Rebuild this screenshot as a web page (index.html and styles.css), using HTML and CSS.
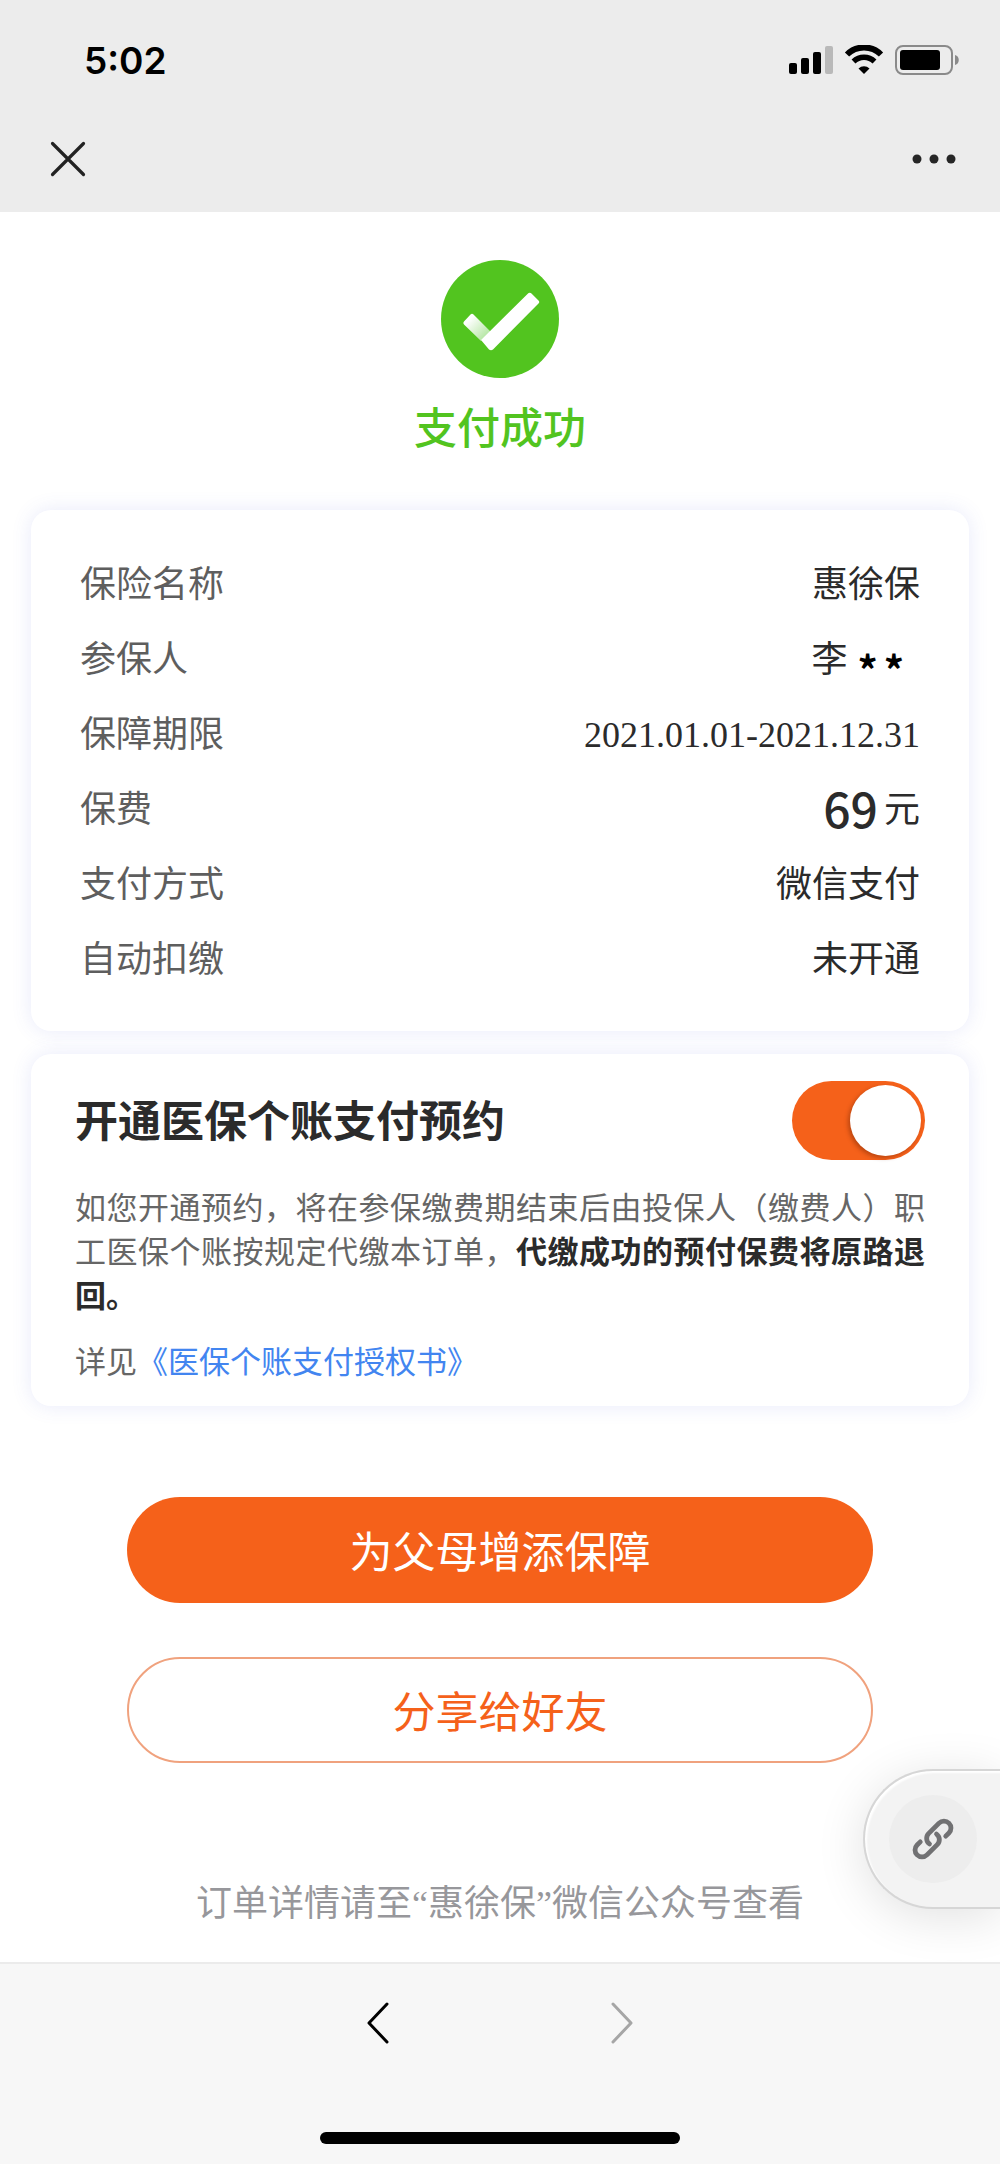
FILE: index.html
```html
<!DOCTYPE html>
<html lang="zh-CN">
<head>
<meta charset="utf-8">
<meta name="viewport" content="width=device-width, initial-scale=1">
<title>支付成功</title>
<link rel="stylesheet" href="styles.css">
</head>
<body>
<div class="page">
  <header class="top">
    <div class="status">
      <span class="time">5:02</span>
      <svg class="status-icons" width="172" height="32" viewBox="0 0 172 32" aria-hidden="true">
        <rect x="1" y="18" width="8" height="11" rx="2"/>
        <rect x="13" y="13" width="8" height="16" rx="2"/>
        <rect x="25" y="7" width="8" height="22" rx="2"/>
        <rect x="37" y="1" width="8" height="28" rx="2" fill="#b9b9b9"/>
        <g fill="none" stroke="#000">
          <path d="M59 9.500A24 24 0 0 1 93 9.500" stroke-width="6"/>
          <path d="M65.500 16.500A15 15 0 0 1 86.500 16.500" stroke-width="5.500"/>
        </g>
        <path d="M70.500 23.500A8 8 0 0 1 81.500 23.500L76 29Z"/>
        <rect x="108" y="1" width="56" height="28" rx="7" fill="none" stroke="#8a8a8a" stroke-width="2"/>
        <rect x="112" y="5" width="40" height="20" rx="3"/>
        <path d="M167 10C172 11 172 19 167 20Z" fill="#8a8a8a"/>
      </svg>
    </div>
    <nav class="nav">
      <button class="icon-button" type="button" aria-label="关闭">
        <svg width="36" height="36" viewBox="0 0 36 36" fill="none" stroke="#222" stroke-width="3.200" stroke-linecap="round"><path d="M2.500 2.500L33.500 33.500M33.500 2.500L2.500 33.500"/></svg>
      </button>
      <button class="icon-button" type="button" aria-label="更多">
        <svg width="44" height="10" viewBox="0 0 44 10" fill="#262626"><circle cx="5" cy="5" r="4.500"/><circle cx="22" cy="5" r="4.500"/><circle cx="39" cy="5" r="4.500"/></svg>
      </button>
    </nav>
  </header>

  <main class="content">
    <section class="result">
      <svg width="118" height="118" viewBox="1 1 118 118" aria-hidden="true">
        <defs>
          <linearGradient id="fold" x1="27" y1="59" x2="46" y2="78" gradientUnits="userSpaceOnUse">
            <stop offset="0.100" stop-color="#fff"/><stop offset="1" stop-color="#b5e6a3"/>
          </linearGradient>
        </defs>
        <circle cx="60" cy="60" r="59" fill="#52c41f"/>
        <path d="M33.500 55.500L50.700 72.700 41 82 24 65.500Q22.500 64 24 62.500L30.500 55.500Q32 54 33.500 55.500Z" fill="url(#fold)"/>
        <path d="M87.500 35L41 81 49 90.500Q51 92 53 90.500L98.500 44.500Q100 43 98.500 41.500L91.500 34.500Q89.500 33 87.500 35Z" fill="#fff"/>
      </svg>
      <h1 class="result-title">支付成功</h1>
    </section>

    <dl class="card details">
      <div class="row"><dt>保险名称</dt><dd>惠徐保</dd></div>
      <div class="row"><dt>参保人</dt><dd class="name">李<span class="mask"><span>*</span><span>*</span></span></dd></div>
      <div class="row"><dt>保障期限</dt><dd class="period">2021.01.01-2021.12.31</dd></div>
      <div class="row"><dt>保费</dt><dd class="price"><span class="amount">69</span>元</dd></div>
      <div class="row"><dt>支付方式</dt><dd>微信支付</dd></div>
      <div class="row"><dt>自动扣缴</dt><dd>未开通</dd></div>
    </dl>

    <section class="card booking">
      <div class="booking-head">
        <label class="booking-title" for="booking">开通医保个账支付预约</label>
        <input class="switch" id="booking" type="checkbox" role="switch" checked>
      </div>
      <p class="booking-text">如您开通预约，将在参保缴费期结束后由投保人（缴费人）职工医保个账按规定代缴本订单，<strong>代缴成功的预付保费将原路退回。</strong></p>
      <p class="booking-more">详见<a href="#">《医保个账支付授权书》</a></p>
    </section>

    <div class="actions">
      <button class="button primary" type="button">为父母增添保障</button>
      <button class="button outline" type="button">分享给好友</button>
    </div>

    <p class="note">订单详情请至“惠徐保”微信公众号查看</p>

    <button class="float" type="button" aria-label="浮窗">
      <span class="float-disc">
        <svg width="48" height="48" viewBox="-24 -24 48 48" fill="none" stroke="#717173" stroke-width="4.800" stroke-linecap="round">
          <g transform="rotate(-45)">
            <path d="M11 7H15.500A7 7 0 0 0 15.500 -7H1A7 7 0 0 0 -6 1"/>
            <path d="M-11 -7H-15.500A7 7 0 0 0 -15.500 7H-1A7 7 0 0 0 6 -1"/>
          </g>
        </svg>
      </span>
    </button>
  </main>

  <footer class="bottom">
    <nav class="pager">
      <button class="icon-button" type="button" aria-label="后退">
        <svg width="24" height="42" viewBox="0 0 24 42" fill="none" stroke="#000" stroke-width="3" stroke-linecap="round" stroke-linejoin="round"><path d="M21 2L3 21L21 40"/></svg>
      </button>
      <button class="icon-button" type="button" aria-label="前进" disabled>
        <svg width="24" height="42" viewBox="0 0 24 42" fill="none" stroke="#a6a6a6" stroke-width="3" stroke-linecap="round" stroke-linejoin="round"><path d="M3 2L21 21L3 40"/></svg>
      </button>
    </nav>
    <div class="home-bar"></div>
  </footer>
</div>
</body>
</html>
```

FILE: styles.css
```css
* {
  box-sizing: border-box;
}

body {
  margin: 0;
  background: #fff;
  color: #2b2b2b;
  font-family: "Noto Sans CJK SC", sans-serif;
  font-size: 36px;
}

h1, p, dl, dd {
  margin: 0;
}

button {
  padding: 0;
  border: 0;
  background: none;
  color: inherit;
  font: inherit;
}

svg {
  display: block;
}

.page {
  display: flex;
  flex-direction: column;
  min-height: 100vh;
}

/* Status bar and title bar */
.top {
  padding-bottom: 14px;
  background: #ececec;
}

.status {
  display: flex;
  align-items: center;
  justify-content: space-between;
  height: 120px;
  padding: 2px 40px 0 84px;
}

.time {
  color: #000;
  font: 600 37px/48px Inter, sans-serif;
}

.nav {
  display: flex;
  align-items: center;
  justify-content: space-between;
  height: 78px;
  padding: 0 44px 0 50px;
}

/* Main content */
.content {
  position: relative;
  flex: 1;
  padding: 48px 31px 32px;
  overflow: hidden;
}

.result {
  display: flex;
  flex-direction: column;
  align-items: center;
  gap: 17px;
  margin-bottom: 55px;
}

.result-title {
  color: #52c41f;
  font-size: 43px;
  font-weight: 500;
  line-height: 60px;
}

.card {
  border-radius: 20px;
  background: #fff;
  box-shadow: 0 0 20px rgba(80, 90, 220, 0.13);
}

.details {
  padding: 34px 49px 37px;
}

.row {
  display: flex;
  align-items: baseline;
  justify-content: space-between;
  height: 75px;
  line-height: 75px;
}

.row dt {
  color: #5e5e5e;
}

.name {
  display: flex;
  align-items: center;
  align-self: center;
  gap: 10px;
  padding-right: 16px;
}

.mask {
  display: flex;
  gap: 6px;
  padding-top: 24px;
  color: #000;
  font-size: 40px;
  font-weight: 700;
  line-height: 48px;
}

.period {
  font-family: "Liberation Serif", serif;
}

.price {
  display: flex;
  align-items: center;
  align-self: center;
  gap: 6px;
}

.amount {
  font-size: 48px;
  font-weight: 500;
  line-height: 60px;
}

.booking {
  margin-top: 23px;
  padding: 27px 44px 24px;
}

.booking-head {
  display: flex;
  align-items: center;
  justify-content: space-between;
}

.booking-title {
  padding-bottom: 6px;
  font-size: 43px;
  font-weight: 700;
  line-height: 60px;
}

.switch {
  display: flex;
  justify-content: flex-end;
  width: 133px;
  height: 79px;
  margin: 0;
  padding: 4px;
  appearance: none;
  border-radius: 40px;
  background: #f5611a;
}

.switch::before {
  width: 71px;
  height: 71px;
  border-radius: 50%;
  background: #fff;
  box-shadow: -2px 2px 4px rgba(100, 30, 0, 0.4);
  content: "";
}

.switch:not(:checked) {
  justify-content: flex-start;
  background: #ccc;
}

.booking-text,
.booking-more {
  color: #666;
  font-size: 31px;
  line-height: 44px;
}

.booking-text {
  margin-top: 24px;
  text-align: justify;
}

.booking-text strong {
  color: #2b2b2b;
  font-weight: 700;
}

.booking-more {
  margin-top: 22px;
}

.booking-more a {
  color: #4285f0;
  text-decoration: none;
}

.actions {
  display: flex;
  flex-direction: column;
  gap: 54px;
  margin: 91px 96px 0;
}

.button {
  height: 106px;
  padding-bottom: 2px;
  border-radius: 53px;
  font-size: 43px;
}

.primary {
  background: #f5611a;
  color: #fff;
}

.outline {
  border: 2px solid #f0a27e;
  color: #f5611a;
}

.note {
  margin-top: 116px;
  color: #97979b;
  font-family: "Liberation Serif", "Noto Sans CJK SC", serif;
  line-height: 50px;
  text-align: center;
}

/* Floating link tab on the right edge */
.float {
  position: absolute;
  right: 0;
  bottom: 53px;
  display: flex;
  align-items: center;
  width: 137px;
  height: 140px;
  padding-left: 24px;
  border: 2px solid #d6d6d6;
  border-right: 0;
  border-radius: 70px 0 0 70px;
  background: #f3f3f3;
  box-shadow: inset 2px 2px 2px #fff, 0 8px 50px rgba(0, 0, 0, 0.12);
}

.float-disc {
  display: grid;
  place-items: center;
  width: 88px;
  height: 88px;
  border-radius: 50%;
  background: #ededed;
}

/* Browser bar */
.bottom {
  display: flex;
  flex-direction: column;
  align-items: center;
  border-top: 2px solid #ebebeb;
  background: #f7f7f7;
}

.pager {
  display: flex;
  align-items: center;
  justify-content: center;
  gap: 220px;
  height: 118px;
}

.home-bar {
  width: 36%;
  height: 12px;
  margin: 50px 0 20px;
  border-radius: 6px;
  background: #000;
}
```
